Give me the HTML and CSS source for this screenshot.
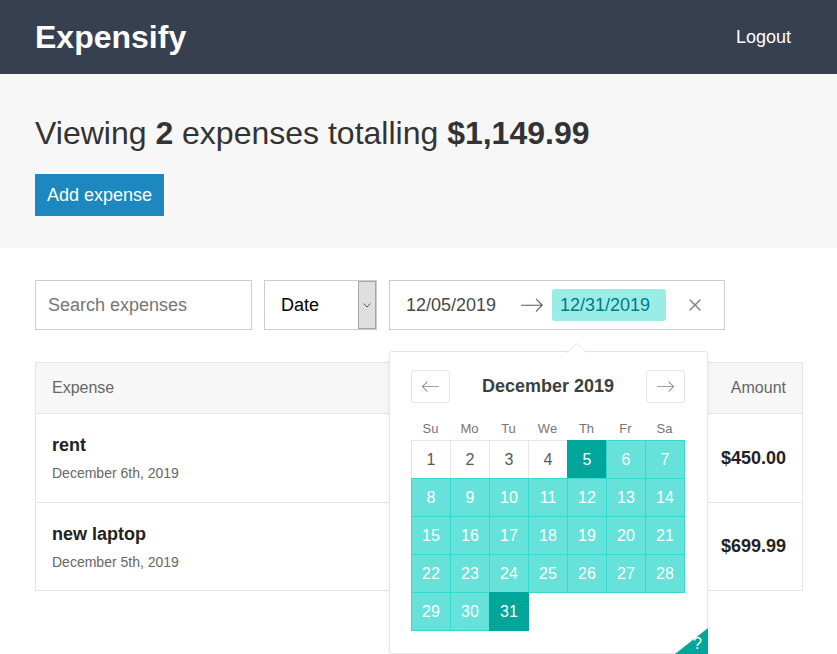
FILE: index.html
```html
<!DOCTYPE html>
<html lang="en">
<head>
<meta charset="utf-8">
<title>Expensify</title>
<link rel="stylesheet" href="styles.css">
</head>
<body>
<header class="header">
  <div class="container header__content">
    <h1 class="header__title">Expensify</h1>
    <button class="button-link">Logout</button>
  </div>
</header>

<div class="page-header">
  <div class="container">
    <h2 class="page-header__title">Viewing <span>2</span> expenses totalling <span>$1,149.99</span></h2>
    <div class="page-header__actions"><a class="button">Add expense</a></div>
  </div>
</div>

<div class="container content">
  <div class="filters">
    <div class="text-input search">Search expenses</div>
    <div class="select">
      <span class="select__value">Date</span>
      <span class="select__btn">
        <svg width="8" height="5" viewBox="0 0 8 5"><path d="M0.5 0.5 L4 4 L7.5 0.5" fill="none" stroke="#555" stroke-width="1"/></svg>
      </span>
    </div>
    <div class="drp">
      <div class="dateinput"><div class="dateinput__text">12/05/2019</div></div>
      <span class="drp__arrow">
        <svg width="24" height="24" viewBox="0 0 1000 1000"><path d="M694.4 242.4l249.1 249.1c11 11 11 21 0 32L694.4 772.7c-5 5-10 7-16 7s-11-2-16-7c-11-11-11-21 0-32l210.1-210.1H67.1c-13 0-23-10-23-23s10-23 23-23h805.4L662.4 274.5c-21-21.1 11-53.1 32-32.1z" fill="#565a5c"/></svg>
      </span>
      <div class="dateinput dateinput--open"><div class="dateinput__text dateinput__text--focused">12/31/2019</div></div>
      <button class="drp__clear">
        <svg width="12" height="12" viewBox="0 0 12 12"><path d="M11.53.47a.75.75 0 0 0-1.061 0l-4.470 4.470L1.529.47A.75.75 0 1 0 .468 1.531l4.470 4.470-4.470 4.470a.75.75 0 1 0 1.061 1.061l4.470-4.470 4.470 4.470a.75.75 0 1 0 1.061-1.061l-4.470-4.470 4.470-4.470a.75.75 0 0 0 0-1.061z" fill="#82888a"/></svg>
      </button>

      <div class="picker">
        <div class="picker__nav">
          <span class="nav-btn">
            <svg width="19" height="19" viewBox="0 0 1000 1000"><path d="M336.2 274.5l-210.1 210h805.4c13 0 23 10 23 23s-10 23-23 23H126.1l210.1 210.1c11 11 11 21 0 32-5 5-10 7-16 7s-11-2-16-7l-249.1-249c-11-11-11-21 0-32l249.1-249.1c21-21.1 53 10.9 32 32z" fill="#82888a"/></svg>
          </span>
          <strong class="picker__caption">December 2019</strong>
          <span class="nav-btn">
            <svg width="19" height="19" viewBox="0 0 1000 1000"><path d="M694.4 242.4l249.1 249.1c11 11 11 21 0 32L694.4 772.7c-5 5-10 7-16 7s-11-2-16-7c-11-11-11-21 0-32l210.1-210.1H67.1c-13 0-23-10-23-23s10-23 23-23h805.4L662.4 274.5c-21-21.1 11-53.1 32-32.1z" fill="#82888a"/></svg>
          </span>
        </div>
        <div class="weekdays">
          <span>Su</span><span>Mo</span><span>Tu</span><span>We</span><span>Th</span><span>Fr</span><span>Sa</span>
        </div>
        <div class="days">
          <span class="day">1</span><span class="day">2</span><span class="day">3</span><span class="day">4</span><span class="day day--end">5</span><span class="day day--span">6</span><span class="day day--span">7</span>
          <span class="day day--span">8</span><span class="day day--span">9</span><span class="day day--span">10</span><span class="day day--span">11</span><span class="day day--span">12</span><span class="day day--span">13</span><span class="day day--span">14</span>
          <span class="day day--span">15</span><span class="day day--span">16</span><span class="day day--span">17</span><span class="day day--span">18</span><span class="day day--span">19</span><span class="day day--span">20</span><span class="day day--span">21</span>
          <span class="day day--span">22</span><span class="day day--span">23</span><span class="day day--span">24</span><span class="day day--span">25</span><span class="day day--span">26</span><span class="day day--span">27</span><span class="day day--span">28</span>
          <span class="day day--span">29</span><span class="day day--span">30</span><span class="day day--end">31</span>
        </div>
        <span class="shortcuts"><span class="shortcuts__q">?</span></span>
      </div>
    </div>
  </div>

  <div class="list">
    <div class="list__header">
      <span>Expense</span>
      <span>Amount</span>
    </div>
    <div class="list__item">
      <div>
        <h3 class="list__title">rent</h3>
        <div class="list__sub">December 6th, 2019</div>
      </div>
      <h3 class="list__amount">$450.00</h3>
    </div>
    <div class="list__item">
      <div>
        <h3 class="list__title">new laptop</h3>
        <div class="list__sub">December 5th, 2019</div>
      </div>
      <h3 class="list__amount">$699.99</h3>
    </div>
  </div>
</div>
</body>
</html>
```

FILE: styles.css
```css
* { box-sizing: border-box; }
html { overflow: hidden; height: 100%; }
body {
  margin: 0;
  min-height: 100%;
  font-family: "Liberation Sans", Arial, Helvetica, sans-serif;
  color: #333;
  background: #fff;
}
.container {
  width: 768px;
  margin-left: 35px;
}

/* header */
.header {
  background: #364051;
  height: 74px;
}
.header__content {
  height: 100%;
  display: flex;
  align-items: center;
  justify-content: space-between;
}
.header__title {
  margin: 0;
  color: #fff;
  font-size: 32px;
  font-weight: bold;
  line-height: 38px;
}
.button-link {
  background: none;
  border: none;
  color: #fff;
  font-family: inherit;
  font-size: 18px;
  line-height: 22px;
  padding: 0 12px;
}

/* page header */
.page-header {
  background: #f7f7f7;
  padding: 40px 0 32px;
}
.page-header__title {
  margin: 0 0 22px;
  font-size: 32px;
  font-weight: normal;
  line-height: 38px;
  color: #333;
}
.page-header__title span { font-weight: bold; }
.page-header__actions { display: flex; }
.button {
  background: #1c88bf;
  color: #fff;
  font-size: 18px;
  line-height: 22px;
  padding: 10px 12px;
}

/* filters */
.content { padding-top: 32px; }
.filters {
  display: flex;
  gap: 12px;
  margin-bottom: 32px;
}
.text-input {
  width: 217px;
  height: 50px;
  border: 1px solid #cacccd;
  padding: 0 12px;
  font-size: 18px;
  line-height: 48px;
  color: #757575;
}
.select {
  width: 113px;
  height: 50px;
  border: 1px solid #cacccd;
  display: flex;
  justify-content: space-between;
  font-size: 18px;
  color: #000;
}
.select__value {
  padding-left: 16px;
  line-height: 48px;
}
.select__btn {
  width: 18px;
  background: #dfdfdf;
  border: 1px solid #a6a6a6;
  display: flex;
  align-items: center;
  justify-content: center;
}

/* date range picker */
.drp {
  position: relative;
  display: flex;
  align-items: center;
  height: 50px;
  border: 1px solid #cacccd;
  background: #fff;
}
.dateinput {
  position: relative;
  width: 130px;
  padding: 8px;
  font-size: 18px;
  line-height: 24px;
  color: #484848;
}
.dateinput__text {
  padding: 4px 8px;
  white-space: nowrap;
  border-radius: 3px;
}
.dateinput__text--focused {
  background: #99ede6;
  color: #007a87;
}
.dateinput--open::before,
.dateinput--open::after {
  content: "";
  position: absolute;
  left: 22px;
  border-left: 11px solid transparent;
  border-right: 11px solid transparent;
  z-index: 3;
}
.dateinput--open::before {
  top: 62px;
  border-bottom: 10px solid rgba(0,0,0,0.1);
}
.dateinput--open::after {
  top: 63px;
  border-bottom: 10px solid #fff;
}
.drp__arrow {
  display: flex;
  width: 24px;
  height: 24px;
}
.drp__clear {
  background: none;
  border: 0;
  padding: 10px;
  margin: 0 13px 0 5px;
  display: flex;
}

/* picker */
.picker {
  position: absolute;
  top: 70px;
  left: -1px;
  width: 319px;
  height: 303px;
  background: #fff;
  border: 1px solid #e6e6e6;
  border-radius: 3px;
  box-shadow: 0 2px 6px rgba(0,0,0,0.05);
  padding-top: 18px;
  z-index: 2;
}
.picker__nav {
  display: flex;
  align-items: center;
  justify-content: space-between;
  padding: 0 22px 0 21px;
}
.nav-btn {
  width: 39px;
  height: 33px;
  border: 1px solid #e4e7e7;
  border-radius: 3px;
  display: flex;
  align-items: center;
  justify-content: center;
}
.picker__caption {
  font-size: 18px;
  color: #3c3f40;
}
.weekdays {
  margin: 17px 0 0 21px;
  display: grid;
  grid-template-columns: repeat(7, 39px);
  font-size: 13px;
  line-height: 18px;
  padding-bottom: 2px;
  color: #757575;
  text-align: center;
}
.days {
  margin-left: 21px;
  display: grid;
  grid-template-columns: repeat(7, 39px);
  grid-auto-rows: 38px;
}
.day {
  width: 40px;
  height: 39px;
  border: 1px solid #e4e7e7;
  font-size: 16px;
  line-height: 37px;
  text-align: center;
  color: #565a5c;
  background: #fff;
}
.day--span {
  background: #66e2da;
  border-color: #33dacd;
  color: #fff;
}
.day--end {
  background: #00a699;
  border-color: #00a699;
  color: #fff;
}
.shortcuts {
  position: absolute;
  right: -1px;
  bottom: -1px;
  width: 0;
  height: 0;
  border-top: 26px solid transparent;
  border-right: 33px solid #00a699;
}
.shortcuts__q {
  position: absolute;
  right: -27px;
  bottom: 2px;
  color: #fff;
  font-size: 16px;
  line-height: 16px;
}

/* list */
.list__header {
  display: flex;
  justify-content: space-between;
  background: #f7f7f7;
  border: 1px solid #e5e5e5;
  padding: 16px;
  font-size: 16px;
  line-height: 18px;
  color: #666;
}
.list__item {
  display: flex;
  justify-content: space-between;
  align-items: center;
  border: 1px solid #e5e5e5;
  border-top: none;
  padding: 20px 16px 20.5px;
}
.list__title {
  margin: 0 0 9px;
  font-size: 18px;
  line-height: 22px;
  color: #222;
}
.list__sub {
  font-size: 14px;
  line-height: 16px;
  color: #666;
}
.list__amount {
  margin: 0;
  font-size: 18px;
  line-height: 22px;
  color: #222;
}
```
